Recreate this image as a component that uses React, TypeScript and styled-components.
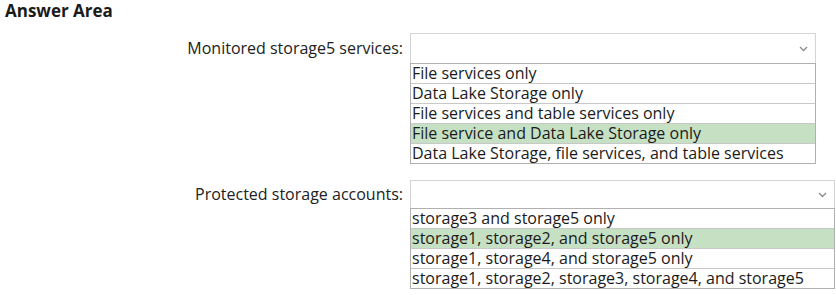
import React from "react";
import styled, {createGlobalStyle} from "styled-components";

const GlobalStyle = createGlobalStyle`
    body {
        margin: 0;
        background: #ffffff;
        font-family: "Open Sans", "Noto Sans", sans-serif;
        color: #1b1b1b;
    }
`;

type Question = {
    label: string;
    width: number;
    headerHeight: number;
    options: string[];
    answer: number;
};

const questions: Question[] = [
    {
        label: "Monitored storage5 services:",
        width: 406,
        headerHeight: 30,
        options: [
            "File services only",
            "Data Lake Storage only",
            "File services and table services only",
            "File service and Data Lake Storage only",
            "Data Lake Storage, file services, and table services",
        ],
        answer: 3,
    },
    {
        label: "Protected storage accounts:",
        width: 425,
        headerHeight: 28,
        options: [
            "storage3 and storage5 only",
            "storage1, storage2, and storage5 only",
            "storage1, storage4, and storage5 only",
            "storage1, storage2, storage3, storage4, and storage5",
        ],
        answer: 1,
    },
];

const Chevron = () => (
    <svg width="9" height="6" viewBox="0 0 9 6">
        <path d="M1 1 L4.5 4.5 L8 1" fill="none" stroke="#8a8a8a" strokeWidth="1.3"/>
    </svg>
);

const App = () => {
    return (
        <Page>
            <GlobalStyle/>
            <Title>Answer Area</Title>
            <Questions>
                {questions.map((q) => (
                    <QuestionRow key={q.label}>
                        <Label $height={q.headerHeight}>{q.label}</Label>
                        <Dropdown $width={q.width}>
                            <SelectHeader $height={q.headerHeight}>
                                <Chevron/>
                            </SelectHeader>
                            <OptionList>
                                {q.options.map((opt, i) => (
                                    <Option key={opt} $selected={i === q.answer}>{opt}</Option>
                                ))}
                            </OptionList>
                        </Dropdown>
                    </QuestionRow>
                ))}
            </Questions>
        </Page>
    );
};

const Page = styled.div`
    width: 836px;
    height: 295px;
    overflow: hidden;
    padding: 1px 0 0 5px;
    box-sizing: border-box;
`;

const Title = styled.div`
    font-weight: 700;
    font-size: 17px;
    line-height: 20px;
`;

const Questions = styled.div`
    display: flex;
    flex-direction: column;
    gap: 16px;
    margin-top: 12px;
`;

const QuestionRow = styled.div`
    display: grid;
    grid-template-columns: 398px auto;
    column-gap: 7px;
    align-items: start;
`;

const Label = styled.div<{ $height: number }>`
    text-align: right;
    font-size: 16px;
    line-height: ${(p) => p.$height}px;
    color: #222;
`;

const Dropdown = styled.div<{ $width: number }>`
    width: ${(p) => p.$width}px;
    display: flex;
    flex-direction: column;
`;

const SelectHeader = styled.div<{ $height: number }>`
    height: ${(p) => p.$height}px;
    box-sizing: border-box;
    border: 1px solid #d4d4d4;
    border-bottom: none;
    display: flex;
    align-items: center;
    justify-content: flex-end;
    padding-right: 7px;
`;

const OptionList = styled.div`
    border: 1px solid #b0b0b0;
    display: flex;
    flex-direction: column;
`;

const Option = styled.div<{ $selected: boolean }>`
    font-size: 16px;
    line-height: 19px;
    height: 20px;
    padding-left: 1px;
    border-bottom: 1px solid #c8c8c8;
    background: ${(p) => (p.$selected ? "#c6e0c4" : "transparent")};
    white-space: nowrap;
    box-sizing: border-box;

    &:last-child {
        border-bottom: none;
        height: 19px;
    }
`;

export default App;
